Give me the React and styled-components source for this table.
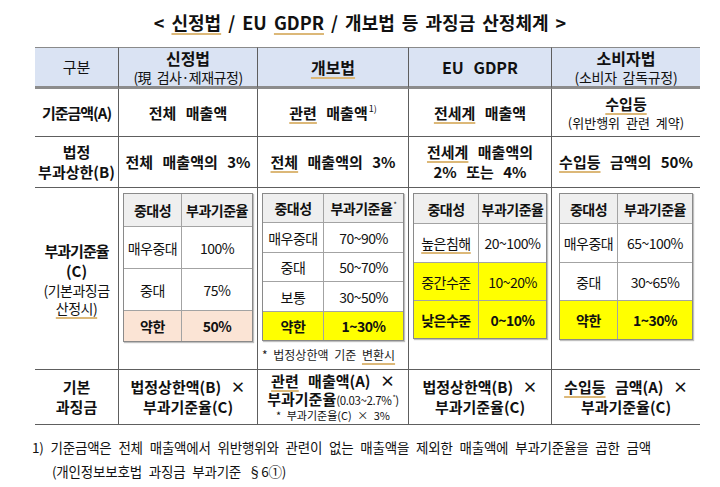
import React from 'react';
import styled, { createGlobalStyle } from 'styled-components';

const GlobalStyle = createGlobalStyle`
  html, body {
    margin: 0;
    padding: 0;
    background: #ffffff;
  }
  body {
    font-family: "Noto Sans CJK KR", "Noto Sans", sans-serif;
    color: #111111;
  }
`;

const Page = styled.div`
  width: 720px;
  height: 487px;
  padding-top: 10px;
  box-sizing: border-box;
`;

const Title = styled.h1`
  margin: 0;
  height: 37px;
  text-align: center;
  font-size: 18px;
  font-weight: 700;
  line-height: 24px;
  word-spacing: 3px;
`;

// spell-check style underline seen in the source document
const Marked = styled.span`
  text-decoration: underline;
  text-decoration-color: #dcb878;
  text-decoration-thickness: 1.5px;
  text-underline-offset: 3px;
`;

const Table = styled.div`
  display: grid;
  grid-template-columns: 84px 139px 151px 143px 148px;
  grid-template-rows: 42px 48px 51px 182px 55px;
  margin-left: 35px;
  width: 665px;
`;

const Cell = styled.div`
  display: flex;
  flex-direction: column;
  align-items: center;
  justify-content: ${p => (p.$top ? 'flex-start' : 'center')};
  padding-top: ${p => (p.$top ? '5px' : '0')};
  box-sizing: border-box;
  text-align: center;
  border-bottom: 1px solid #5e5e5e;
  border-right: ${p => (p.$last ? 'none' : '1px solid #5e5e5e')};
  font-size: 15px;
  font-weight: 700;
  line-height: 20px;
  word-spacing: 6px;
  white-space: nowrap;
`;

const HeadCell = styled(Cell)`
  background: #dae3f3;
  border-top: 1px solid #8a8a8a;
  border-bottom: 3px solid #8c8c8c;
  font-size: 16px;
  line-height: 20px;
`;

const LabelCell = styled(Cell)`
  letter-spacing: -1px;
  word-spacing: 0;
`;

const Line = styled.span`
  display: block;
  line-height: ${p => p.$lh || 20}px;
  height: ${p => p.$lh || 20}px;
  font-size: ${p => p.$size || 15}px;
  font-weight: ${p => (p.$light ? 400 : 700)};
  letter-spacing: ${p => p.$ls || 0}px;
  word-spacing: ${p => (p.$ws === undefined ? 6 : p.$ws)}px;
`;

const Small = styled.span`
  font-size: ${p => p.$size || 12}px;
  font-weight: 400;
  letter-spacing: ${p => p.$ls || 0}px;
`;

const Sup = styled.sup`
  font-size: ${p => p.$size || 9}px;
  font-weight: 400;
  line-height: 0;
  vertical-align: ${p => p.$raise || 7}px;
  margin-left: 1px;
`;

const Grid = styled.div`
  display: grid;
  grid-template-columns: ${p => p.$cols.map(c => `${c}px`).join(' ')};
  grid-template-rows: ${p => p.$rows.map(r => `${r}px`).join(' ')};
  gap: 1px;
  background: #a3a3a3;
  border: 1px solid #8a8a8a;
  box-shadow: 1px 1px 1px rgba(0, 0, 0, 0.25);
`;

const toneBg = {
  head: '#efefef',
  peach: '#fbe4d5',
  yellow: '#ffff00',
  plain: '#ffffff',
};

const GridCell = styled.div`
  display: flex;
  align-items: center;
  justify-content: center;
  background: ${p => toneBg[p.$tone || 'plain']};
  font-size: 14px;
  font-weight: ${p => (p.$bold ? 700 : 400)};
  white-space: nowrap;
  letter-spacing: -0.5px;
`;

const Note = styled.div`
  margin-top: 6px;
  align-self: flex-start;
  padding-left: 4px;
  font-size: 12px;
  line-height: 16px;
  font-weight: 400;
  word-spacing: 3px;
  color: #222;
`;

const Footnote = styled.div`
  padding: 10px 0 0 32px;
  font-size: 13.5px;
  line-height: 24px;
  word-spacing: 4px;
  letter-spacing: -0.2px;
`;

const FootLine = styled.div`
  padding-left: ${p => p.$indent || 0}px;
`;

function RateTable({ cols, rows, head, data }) {
  return (
    <Grid $cols={cols} $rows={rows}>
      {head.map((h, i) => (
        <GridCell key={`h${i}`} $tone="head" $bold>{h}</GridCell>
      ))}
      {data.map((r, ri) =>
        r.cells.map((c, ci) => (
          <GridCell key={`${ri}-${ci}`} $tone={r.tone} $bold={r.bold}>{c}</GridCell>
        ))
      )}
    </Grid>
  );
}

const starHead = (
  <span>부과기준율<Sup $size={8} $raise={6}>*</Sup></span>
);

export default function App() {
  return (
    <Page>
      <GlobalStyle />
      <Title>
        &lt; <Marked>신정법</Marked> / EU <Marked>GDPR</Marked> / 개보법 등 과징금 산정체계 &gt;
      </Title>

      <Table>
        {/* header */}
        <HeadCell><Line $light>구분</Line></HeadCell>
        <HeadCell>
          <Line $size={16} $lh={20}>신정법</Line>
          <Line $light $size={14} $lh={18} $ls={-0.5} $ws={3}>(現 검사·제재규정)</Line>
        </HeadCell>
        <HeadCell><Marked>개보법</Marked></HeadCell>
        <HeadCell>EU GDPR</HeadCell>
        <HeadCell $last>
          <Line $size={16} $lh={20}>소비자법</Line>
          <Line $light $size={14} $lh={18} $ls={-0.3} $ws={3}>(소비자 감독규정)</Line>
        </HeadCell>

        {/* 기준금액 */}
        <LabelCell>기준금액(A)</LabelCell>
        <Cell>전체 매출액</Cell>
        <Cell><span><Marked>관련</Marked> 매출액<Sup>1)</Sup></span></Cell>
        <Cell><span><Marked>전세계</Marked> 매출액</span></Cell>
        <Cell $last>
          <Line><Marked>수입등</Marked></Line>
          <Line $light $size={13} $lh={18} $ws={3}>(위반행위 관련 계약)</Line>
        </Cell>

        {/* 부과상한 */}
        <LabelCell>
          <Line>법정</Line>
          <Line>부과상한(B)</Line>
        </LabelCell>
        <Cell>전체 매출액의 3%</Cell>
        <Cell><span><Marked>전체</Marked> 매출액의 3%</span></Cell>
        <Cell>
          <Line><Marked>전세계</Marked> 매출액의</Line>
          <Line>2% 또는 4%</Line>
        </Cell>
        <Cell $last><span><Marked>수입등</Marked> 금액의 50%</span></Cell>

        {/* 부과기준율 */}
        <LabelCell>
          <Line $ls={-1}>부과기준율</Line>
          <Line>(C)</Line>
          <Line $light $size={14} $lh={18} $ls={-0.5}>(기본과징금</Line>
          <Line $light $size={14} $lh={18} $ls={-0.5}><Marked>산정시)</Marked></Line>
        </LabelCell>
        <Cell $top>
          <RateTable
            cols={[57, 70]}
            rows={[32, 41, 41, 30]}
            head={['중대성', '부과기준율']}
            data={[
              { cells: ['매우중대', '100%'] },
              { cells: ['중대', '75%'] },
              { cells: ['약한', '50%'], tone: 'peach', bold: true },
            ]}
          />
        </Cell>
        <Cell $top>
          <RateTable
            cols={[60, 79]}
            rows={[28, 29, 28, 29, 28]}
            head={['중대성', starHead]}
            data={[
              { cells: ['매우중대', '70~90%'] },
              { cells: ['중대', '50~70%'] },
              { cells: ['보통', '30~50%'] },
              { cells: ['약한', '1~30%'], tone: 'yellow', bold: true },
            ]}
          />
          <Note>* 법정상한액 기준 <Marked>변환시</Marked></Note>
        </Cell>
        <Cell $top>
          <RateTable
            cols={[64, 67]}
            rows={[29, 38, 37, 37]}
            head={['중대성', '부과기준율']}
            data={[
              { cells: [<Marked key="m">높은침해</Marked>, '20~100%'] },
              { cells: ['중간수준', '10~20%'], tone: 'yellow' },
              { cells: ['낮은수준', '0~10%'], tone: 'yellow', bold: true },
            ]}
          />
        </Cell>
        <Cell $top $last>
          <RateTable
            cols={[57, 74]}
            rows={[29, 38, 37, 38]}
            head={['중대성', '부과기준율']}
            data={[
              { cells: ['매우중대', '65~100%'] },
              { cells: ['중대', '30~65%'] },
              { cells: ['약한', '1~30%'], tone: 'yellow', bold: true },
            ]}
          />
        </Cell>

        {/* 기본과징금 */}
        <LabelCell>
          <Line>기본</Line>
          <Line>과징금</Line>
        </LabelCell>
        <Cell>
          <Line>법정상한액(B) ×</Line>
          <Line>부과기준율(C)</Line>
        </Cell>
        <Cell>
          <Line $lh={19}><Marked>관련</Marked> 매출액(A) ×</Line>
          <Line $lh={18} $ws={0}>
            부과기준율<Small $size={11.5} $ls={-0.4}>(0.03~2.7%<Sup $size={7} $raise={5}>*</Sup>)</Small>
          </Line>
          <Line $light $size={11} $lh={15} $ws={3}>* 부과기준율(C) × 3%</Line>
        </Cell>
        <Cell>
          <Line>법정상한액(B) ×</Line>
          <Line>부과기준율(C)</Line>
        </Cell>
        <Cell $last>
          <Line><Marked>수입등</Marked> 금액(A) ×</Line>
          <Line>부과기준율(C)</Line>
        </Cell>
      </Table>

      <Footnote>
        <FootLine>1) 기준금액은 전체 매출액에서 위반행위와 관련이 없는 매출액을 제외한 매출액에 부과기준율을 곱한 금액</FootLine>
        <FootLine $indent={20}>(개인정보보호법 과징금 부과기준 §6①)</FootLine>
      </Footnote>
    </Page>
  );
}
